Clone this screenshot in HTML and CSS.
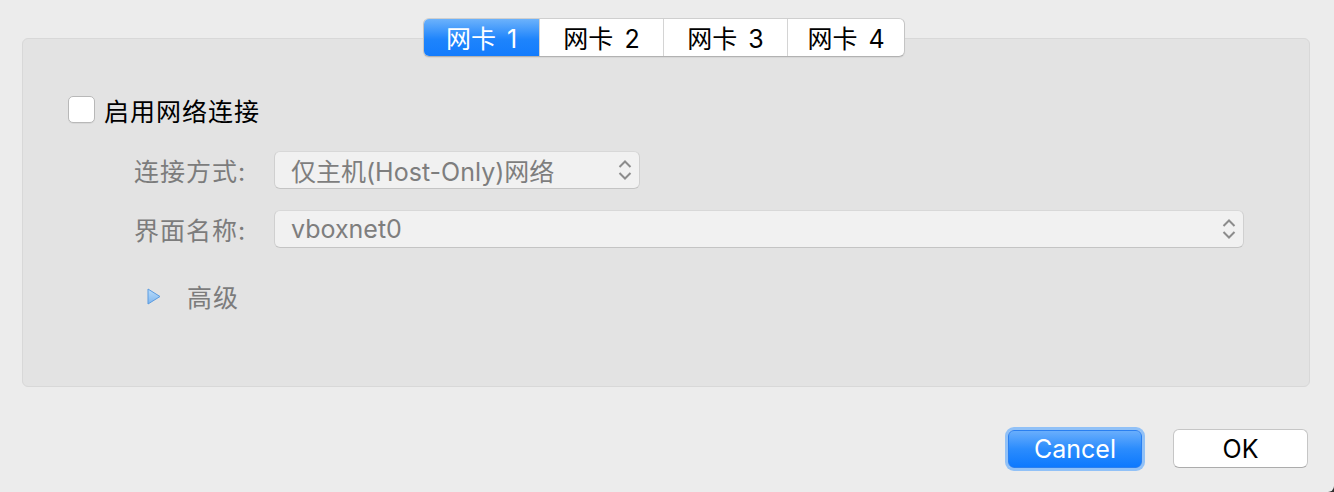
FILE: index.html
```html
<!DOCTYPE html>
<html>
<head>
<meta charset="utf-8">
<link rel="stylesheet" href="styles.css">
</head>
<body>
<div class="window">
  <div class="tabbar">
    <div class="tab tab-1 active">网卡 1</div>
    <div class="tab tab-2">网卡 2</div>
    <div class="tab tab-3">网卡 3</div>
    <div class="tab tab-4">网卡 4</div>
  </div>
  <div class="group">
    <div class="check-row">
      <span class="checkbox"></span>
      <span class="check-label">启用网络连接</span>
    </div>
    <div class="form">
      <div class="form-row">
        <span class="label">连接方式:</span>
        <div class="select select-short">
          <span class="select-text">仅主机(Host-Only)网络</span>
          <svg class="chev" width="14" height="24" viewBox="0 0 14 24"><polyline points="1.5,9 7,3.5 12.5,9" fill="none" stroke="#8c8c8c" stroke-width="2"/><polyline points="1.5,15 7,20.5 12.5,15" fill="none" stroke="#8c8c8c" stroke-width="2"/></svg>
        </div>
      </div>
      <div class="form-row">
        <span class="label">界面名称:</span>
        <div class="select select-long">
          <span class="select-text">vboxnet0</span>
          <svg class="chev" width="14" height="24" viewBox="0 0 14 24"><polyline points="1.5,9 7,3.5 12.5,9" fill="none" stroke="#8c8c8c" stroke-width="2"/><polyline points="1.5,15 7,20.5 12.5,15" fill="none" stroke="#8c8c8c" stroke-width="2"/></svg>
        </div>
      </div>
      <div class="adv-row">
        <svg class="disclosure" width="14" height="17" viewBox="0 0 14 17">
          <defs><linearGradient id="tg" x1="0" y1="0" x2="0" y2="1"><stop offset="0" stop-color="#b9dcfb"/><stop offset="1" stop-color="#7fb6ee"/></linearGradient></defs>
          <polygon points="1,1 13,8.5 1,16" fill="url(#tg)" stroke="#5b9be0" stroke-width="1" stroke-linejoin="round"/>
        </svg>
        <span class="adv-label">高级</span>
      </div>
    </div>
  </div>
  <div class="footer">
    <button class="btn btn-primary">Cancel</button>
    <button class="btn btn-default">OK</button>
  </div>
</div>
</body>
</html>
```
FILE: styles.css
```css
html {
  background: #2e2e2e;
}
body {
  margin: 0;
  width: 1334px;
  height: 492px;
  overflow: hidden;
  font-family: Inter, "Noto Sans CJK SC", sans-serif;
}
.window {
  width: 1334px;
  height: 492px;
  background: #ececec;
  border-bottom-right-radius: 6px;
  padding-top: 18px;
  box-sizing: border-box;
}
.tabbar {
  position: relative;
  z-index: 2;
  display: flex;
  width: 482px;
  height: 39px;
  margin: 0 0 -19px 423px;
  box-sizing: border-box;
  border: 1px solid #c4c4c4;
  border-top-color: #cfcfcf;
  border-bottom-color: #b2b2b2;
  border-radius: 6px;
  background: #ffffff;
  overflow: hidden;
  box-shadow: 0 1px 1px rgba(0,0,0,0.06);
}
.tab {
  display: flex;
  align-items: center;
  justify-content: center;
  font-size: 25px;
  word-spacing: 4px;
  color: #000;
  border-left: 1px solid #d4d4d4;
  height: 100%;
  padding-bottom: 1px;
  box-sizing: border-box;
}
.tab-1 { width: 115px; border-left: none; }
.tab-2 { width: 124px; }
.tab-3 { width: 124px; }
.tab-4 { flex: 1; }
.tab.active {
  background: linear-gradient(#6cb2fb, #1e84fc 55%, #137cfd);
  color: #fff;
}
.group {
  width: 1288px;
  height: 349px;
  margin-left: 22px;
  box-sizing: border-box;
  background: #e3e3e3;
  border: 1px solid #d8d8d8;
  border-radius: 6px;
  padding: 57px 0 0 45px;
}
.check-row {
  display: flex;
  align-items: center;
  height: 27px;
}
.checkbox {
  width: 27px;
  height: 27px;
  box-sizing: border-box;
  background: #fff;
  border: 1px solid #b8b8b8;
  border-radius: 5px;
  box-shadow: 0 1px 0 rgba(0,0,0,0.05);
}
.check-label {
  margin-left: 9px;
  font-size: 25px;
  letter-spacing: 1px;
  color: #000;
}
.form {
  padding-left: 66px;
  padding-top: 28px;
  display: flex;
  flex-direction: column;
  gap: 21px;
}
.form-row {
  display: flex;
  align-items: center;
  height: 38px;
}
.label {
  width: 140px;
  font-size: 25px;
  letter-spacing: 1px;
  color: #7c7c7c;
}
.select {
  height: 38px;
  box-sizing: border-box;
  background: #f1f1f1;
  border: 1px solid #d0d0d0;
  border-top-color: #d8d8d8;
  border-bottom-color: #c4c4c4;
  border-radius: 6px;
  display: flex;
  align-items: center;
  justify-content: space-between;
  padding: 0 7px 0 16px;
}
.select-short { width: 366px; }
.select-long { width: 970px; }
.select-text {
  font-size: 25px;
  color: #7e7e7e;
}
.chev { display: block; }
.adv-row {
  display: flex;
  align-items: center;
  height: 28px;
  margin-top: 13px;
  padding-left: 13px;
}
.disclosure { display: block; }
.adv-label {
  margin-left: 26px;
  font-size: 25px;
  letter-spacing: 1px;
  color: #7c7c7c;
}
.footer {
  display: flex;
  justify-content: flex-end;
  align-items: center;
  gap: 31px;
  padding-right: 26px;
  margin-top: 42px;
}
.btn {
  font-family: Inter, "Noto Sans CJK SC", sans-serif;
  font-size: 25px;
  height: 39px;
  box-sizing: border-box;
  border-radius: 6px;
  padding: 0;
  margin: 0;
}
.btn-primary {
  width: 134px;
  height: 38px;
  color: #fff;
  border: 1px solid #2a7ff0;
  background: linear-gradient(#69aefc, #2b8cfd 50%, #0d79fe);
  box-shadow: 0 0 0 3px #91c1f7;
}
.btn-default {
  width: 135px;
  color: #000;
  background: #fff;
  border: 1px solid #c6c6c6;
  border-bottom-color: #acacac;
}
```
